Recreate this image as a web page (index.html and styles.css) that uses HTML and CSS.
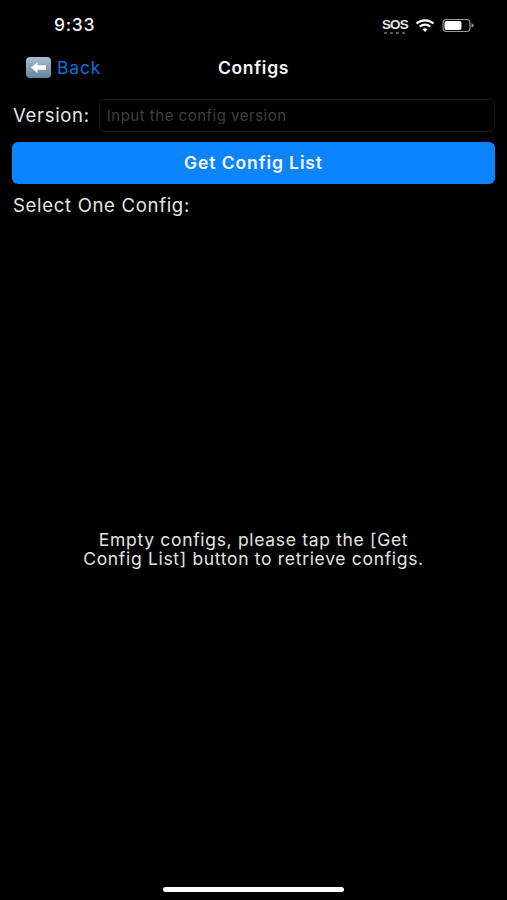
FILE: index.html
```html
<!DOCTYPE html>
<html lang="en">
<head>
<meta charset="utf-8">
<title>Configs</title>
<link rel="stylesheet" href="styles.css">
</head>
<body>
<div class="app">
  <header class="status">
    <span class="time">9:33</span>
    <div class="status-icons">
      <div class="sos"><span class="sos-text">SOS</span><span class="sos-dots"><i></i><i></i><i></i><i></i></span></div>
      <svg class="wifi" width="20" height="15" viewBox="0 0 20 15"><path d="M1.500 5.500C6.300 1.200 13.700 1.200 18.500 5.500" fill="none" stroke="#fff" stroke-width="2.200"/><path d="M4.800 8.600C7.800 6 12.200 6 15.200 8.600" fill="none" stroke="#fff" stroke-width="2.200"/><path d="M10 14L7.400 11.200C9 10 11 10 12.600 11.200Z" fill="#fff"/></svg>
      <svg class="battery" width="33" height="15" viewBox="0 0 33 15"><rect x="1" y="1.500" width="27" height="12" rx="3.500" fill="none" stroke="#9a9a9a" stroke-width="1.200"/><rect x="2.500" y="3" width="17" height="9" rx="2.200" fill="#fff"/><path d="M29.500 5.200C31 5.700 31.600 6.500 31.600 7.500S31 9.300 29.500 9.800Z" fill="#9a9a9a"/></svg>
    </div>
  </header>
  <nav class="nav">
    <div class="back">
      <svg class="back-icon" width="25" height="21" viewBox="0 0 25 21"><defs><linearGradient id="k" x1="0" y1="0" x2="0" y2="1"><stop offset="0" stop-color="#a9bdd2"/><stop offset="1" stop-color="#64849f"/></linearGradient></defs><rect width="25" height="21" rx="4" fill="url(#k)"/><path d="M5 10.500L11.500 5V8.300H20V12.700H11.500V16Z" fill="#fff"/></svg>
      <span class="back-text">Back</span>
    </div>
    <h1 class="title">Configs</h1>
  </nav>
  <main class="content">
    <div class="version-row">
      <label class="label version-label" for="v">Version:</label>
      <input class="input" id="v" type="text" placeholder="Input the config version">
    </div>
    <button class="primary" type="button">Get Config List</button>
    <p class="label select">Select One Config:</p>
    <div class="empty"><p class="empty-text">Empty configs, please tap the [Get<br>Config List] button to retrieve configs.</p></div>
  </main>
  <footer class="home"><span class="home-bar"></span></footer>
</div>
</body>
</html>
```
FILE: styles.css
```css
* { box-sizing: border-box; }
html, body { margin: 0; background: #000; }
body { font-family: Inter, "Liberation Sans", sans-serif; color: #fff; }
.app { width: 507px; height: 900px; display: flex; flex-direction: column; overflow: hidden; background: #000; }

.status { height: 48px; flex: none; display: flex; justify-content: space-between; align-items: center; padding: 2px 32px 0 54px; }
.time { margin-top: -2px; font-size: 17.500px; font-weight: 500; color: #f2f2f2; letter-spacing: 0.7px; }
.status-icons { display: flex; align-items: center; gap: 7px; }
.sos { display: flex; flex-direction: column; align-items: center; gap: 1px; margin-top: 3px; margin-left: 1px; }
.sos-text { font-size: 13.500px; line-height: 12px; font-weight: 700; font-family: "Liberation Sans", sans-serif; letter-spacing: -0.800px; color: #e4e4e4; }
.sos-dots { display: flex; gap: 3px; }
.sos-dots i { width: 3px; height: 2px; border-radius: 1px; background: #666; }
.wifi, .battery { display: block; }

.nav { height: 40px; flex: none; position: relative; display: flex; align-items: center; justify-content: center; padding-bottom: 2px; }
.back { position: absolute; left: 26px; top: 9px; display: flex; align-items: center; gap: 6px; }
.back-icon { display: block; margin-top: -1px; }
.back-text { font-size: 17.500px; letter-spacing: 0.800px; color: #0a6fd6; }
.title { margin: 0; font-size: 17.500px; font-weight: 600; letter-spacing: 0.700px; color: #f6f6f6; }

.content { flex: 1; min-height: 0; display: flex; flex-direction: column; padding: 11px 12px 0; }
.version-row { display: flex; align-items: center; gap: 9px; height: 33px; flex: none; }
.label { margin: 0 0 0 1px; font-size: 18.500px; letter-spacing: 0.700px; color: #e6e6e6; }
.version-label { padding-bottom: 2px; }
.input { flex: 1; min-width: 0; height: 33px; padding: 0 7px; background: #000; border: 1px solid #1a1a1a; border-radius: 5px; font: 15px Inter, "Liberation Sans", sans-serif; letter-spacing: 0.500px; color: #fff; }
.input::placeholder { color: #3f3f3f; opacity: 1; }
.primary { flex: none; height: 42px; margin-top: 10px; padding: 0 0 2px; border: 0; border-radius: 6px; background: #0d84ff; color: #f4f8ff; font: 600 17.500px Inter, "Liberation Sans", sans-serif; letter-spacing: 0.900px; }
.select { flex: none; margin-top: 10px; line-height: 22px; }
.empty { flex: 1; min-height: 0; display: flex; align-items: center; justify-content: center; }
.empty-text { margin: 0; text-align: center; font-size: 17.500px; letter-spacing: 0.680px; line-height: 19px; color: #e2e2e2; }

.home { height: 19px; flex: none; display: flex; justify-content: center; padding-top: 6px; }
.home-bar { width: 181px; height: 5px; border-radius: 3px; background: #fff; }
```
